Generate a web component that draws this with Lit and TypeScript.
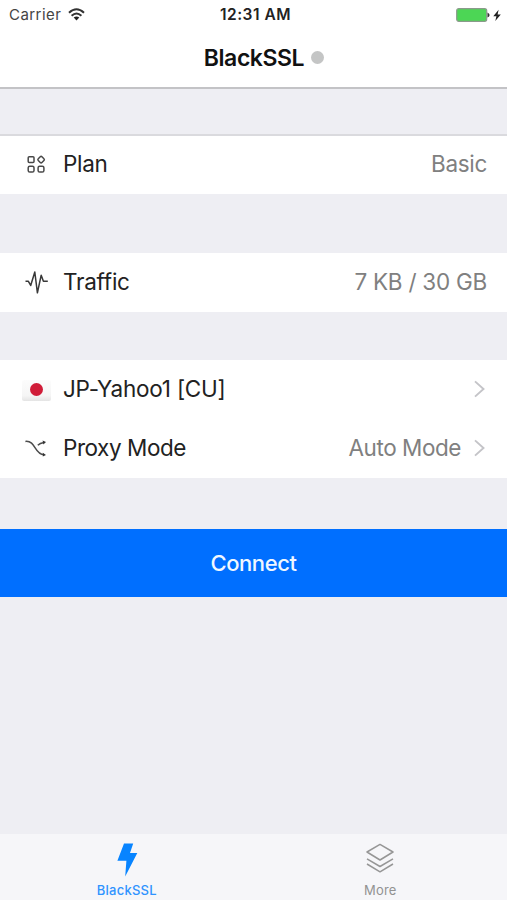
import { LitElement, html, css, svg, nothing } from "lit";
import { customElement, property } from "lit/decorators.js";

const icons: Record<string, unknown> = {
  plan: svg`<g fill="none" stroke="#484848" stroke-width="1.5">
    <rect x="5.2" y="5.8" width="5.8" height="5.8" rx="1"/>
    <rect x="15.5" y="6" width="5.2" height="5.2" rx="1.2" transform="rotate(45 18.1 8.6)"/>
    <rect x="5.2" y="15.2" width="5.8" height="5.8" rx="1.6"/>
    <rect x="15.1" y="15.2" width="5.8" height="5.8" rx="1.6"/></g>`,
  traffic: svg`<path d="M2.5 13.3H5.4L7.7 17.5L11.8 4L14.4 24.8L18.2 7.2L20.4 13.3H24.8" fill="none" stroke="#383838" stroke-width="1.5" stroke-linejoin="round"/>`,
  mode: svg`<g fill="none" stroke="#4c4c4c" stroke-width="1.5">
    <path d="M2.4 7.4C13 6.4 11 20.2 21 20.8M14.8 11.2C16.6 9.4 18.6 8.8 21 8.4"/>
    <path d="M19.6 6.6L23 8L20.4 10.4ZM19.8 18.8L23 21.1L19.8 22.6Z" fill="#333" stroke="none"/></g>`,
};

@customElement("list-row")
export class ListRow extends LitElement {
  @property() icon = "";
  @property() label = "";
  @property() value = "";
  @property({ type: Boolean }) link = false;

  static styles = css`
    :host { display: flex; align-items: center; height: 59px; box-sizing: border-box; padding: 0 20px 2px 23px; background: #fff; }
    .icon { width: 27px; height: 27px; flex: none; margin-right: 13px; }
    .flag { width: 29px; height: 21px; flex: none; margin: 3px 12px 0 -1px; box-sizing: border-box; display: flex; align-items: center; justify-content: center; padding-bottom: 1px;
      background: linear-gradient(#fcfcfc, #f5f5f5 75%, #e4e4e4); border-radius: 2px; }
    .sun { width: 13px; height: 13px; border-radius: 50%; background: #d01c38; }
    .label { flex: 1; color: #222; white-space: pre; }
    .value { color: #808080; white-space: pre; }
    .chevron { width: 12px; height: 20px; margin: 0 1px 0 13px; flex: none; }
  `;

  render() {
    return html`
      ${this.icon === "flag"
        ? html`<span class="flag"><span class="sun"></span></span>`
        : html`<svg class="icon" viewBox="0 0 27 27">${icons[this.icon]}</svg>`}
      <span class="label">${this.label}</span>
      <span class="value">${this.value}</span>
      ${this.link
        ? html`<svg class="chevron" viewBox="0 0 12 20"><path d="M1 2.4L9.5 10L1 17.6" fill="none" stroke="#c4c4c8" stroke-width="1.9"/></svg>`
        : nothing}
    `;
  }
}

@customElement("app-root")
export class AppRoot extends LitElement {
  static styles = css`
    :host { display: flex; flex-direction: column; height: 900px; background: #eeeef3; overflow: hidden;
      font: 400 22.5px/28px Inter, "Liberation Sans", sans-serif; letter-spacing: -.33px; }
    header { height: 89px; box-sizing: border-box; background: #fff; border-bottom: 2px solid #c3c3c6; }
    .status { display: grid; grid-template-columns: 1fr auto 1fr; align-items: center; height: 30px; padding: 0 6px 0 9px; font-size: 15px; line-height: 20px; letter-spacing: 0; }
    .carrier { display: flex; align-items: center; gap: 7px; color: #444; letter-spacing: .45px; }
    .wifi { width: 17px; height: 13px; margin-top: -2px; }
    .time { font-weight: 600; font-size: 15.5px; color: #222; letter-spacing: .5px; padding-left: 1px; }
    .power { justify-self: end; display: flex; align-items: center; }
    .battery { width: 34px; height: 14px; }
    .charge { width: 8px; height: 13px; margin-left: 3px; }
    .title { display: flex; align-items: center; justify-content: center; gap: 7px; height: 55px; padding-left: 21px; font-size: 23px; font-weight: 600; color: #111; letter-spacing: -.42px; }
    .dot { width: 13px; height: 13px; border-radius: 50%; background: #c4c5c5; }
    .plan { margin-top: 45px; border-top: 2px solid #dadade; height: 60px; }
    .traffic { margin-top: 59px; letter-spacing: -.25px; }
    .server { margin-top: 48px; letter-spacing: -.22px; }
    .mode { letter-spacing: -.45px; }
    .connect { margin: 51px 0 0; height: 68px; border: 0; padding: 0; background: #006fff; color: #f0f7ff; font: 500 22px/28px Inter, sans-serif; letter-spacing: -.4px; }
    nav { margin-top: auto; height: 66px; display: grid; grid-template-columns: 1fr 1fr; background: #f6f6f9; color: #929292; font-size: 13px; line-height: 16px; letter-spacing: .2px; }
    .tab { display: flex; flex-direction: column; align-items: center; padding-top: 7px; box-sizing: border-box; }
    .tab svg { width: 36px; height: 36px; margin-bottom: 5px; }
    .active { color: #2f93ff; font-weight: 500; letter-spacing: .25px; }
  `;

  render() {
    return html`
      <header>
        <div class="status">
          <span class="carrier">Carrier
            <svg class="wifi" viewBox="0 0 17 13"><g fill="none" stroke="#333" stroke-width="2">
              <path d="M1 4.7Q8.5 -2.2 16 4.7M3.6 7.7Q8.5 3.2 13.4 7.7"/></g><path d="M5.7 9.6Q8.5 7.4 11.3 9.6L8.5 12.6Z" fill="#222"/></svg>
          </span>
          <span class="time">12:31 AM</span>
          <span class="power">
            <svg class="battery" viewBox="0 0 34 14"><rect x=".7" y=".7" width="30" height="12.6" rx="2" fill="#4cd655" stroke="#8b9a8b" stroke-width="1.2"/><path d="M31.5 4.5Q33.6 5.5 33.6 7T31.5 9.5Z" fill="#333"/></svg>
            <svg class="charge" viewBox="0 0 8 13"><path d="M5.6 .8L.3 7.2H3.4L2.3 12L7.8 5.5H4.6Z" fill="#222"/></svg>
          </span>
        </div>
        <div class="title"><span>BlackSSL</span><span class="dot"></span></div>
      </header>
      <list-row class="plan" icon="plan" label="Plan" value="Basic"></list-row>
      <list-row class="traffic" icon="traffic" label="Traffic" value="7 KB / 30 GB"></list-row>
      <list-row class="server" icon="flag" label="JP-Yahoo1 [CU]" link></list-row>
      <list-row class="mode" icon="mode" label="Proxy Mode" value="Auto Mode" link></list-row>
      <button class="connect">Connect</button>
      <nav>
        <div class="tab active">
          <svg viewBox="0 0 36 36"><path d="M15 2.4H24.2L21 12H28.3L16.2 35.6L17.4 19.7H8.4Z" fill="#0884ff"/></svg>
          <span>BlackSSL</span>
        </div>
        <div class="tab">
          <svg viewBox="0 0 36 36"><path d="M18 3.4L31 11L18 19L5 11ZM5 17.8L18 25.5L31 17.8M5 23L18 30.8L31 23" fill="none" stroke="#969696" stroke-width="1.5" stroke-linejoin="round"/></svg>
          <span>More</span>
        </div>
      </nav>
    `;
  }
}
